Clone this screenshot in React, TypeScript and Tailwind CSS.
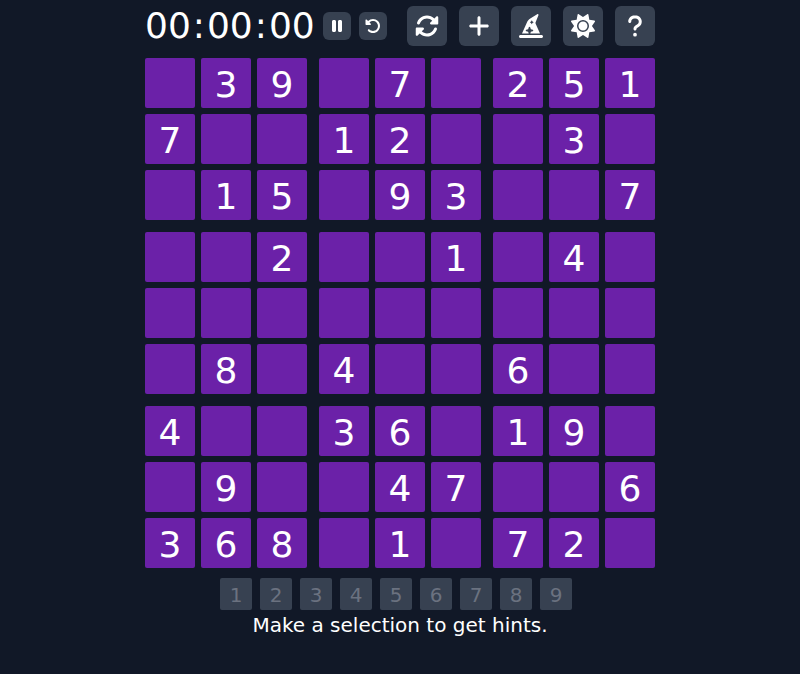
import type { ReactNode } from "react";
import { FaHatWizard, FaPause, FaPlus, FaQuestion, FaRotate, FaRotateLeft, FaSun } from "react-icons/fa6";

const rows = [
  "039070251",
  "700120030",
  "015093007",
  "002001040",
  "000000000",
  "080400600",
  "400360190",
  "090047006",
  "368010720",
];

const bands = [0, 3, 6];
const digits = [1, 2, 3, 4, 5, 6, 7, 8, 9];

function ToolButton({ label, children }: { label: string; children: ReactNode }) {
  return (
    <button type="button" aria-label={label} className="flex size-10 items-center justify-center rounded-md bg-[#374151] text-2xl">
      {children}
    </button>
  );
}

function TimerButton({ label, children }: { label: string; children: ReactNode }) {
  return (
    <button type="button" aria-label={label} className="flex size-7 items-center justify-center rounded-md bg-[#374151] text-base">
      {children}
    </button>
  );
}

function Cell({ value, row, column }: { value: string; row: number; column: number }) {
  return (
    <button
      type="button"
      aria-label={`Row ${row}, column ${column}`}
      className="flex size-[50px] items-center justify-center rounded-xs bg-[#6b21a8] pt-1 text-4xl"
    >
      {value === "0" ? "" : value}
    </button>
  );
}

export default function App() {
  return (
    <main className="flex min-h-screen flex-col items-center bg-[#111827] font-[Verdana,'DejaVu_Sans',sans-serif] text-white">
      <header className="flex h-[52px] w-full max-w-[510px] items-center justify-between">
        <div className="flex items-center gap-2">
          <time className="text-4xl">
            00<span className="px-0.5">:</span>00<span className="px-0.5">:</span>00
          </time>
          <TimerButton label="Pause"><FaPause /></TimerButton>
          <TimerButton label="Restart"><FaRotateLeft /></TimerButton>
        </div>
        <div className="flex gap-3">
          <ToolButton label="Refresh"><FaRotate /></ToolButton>
          <ToolButton label="New game"><FaPlus /></ToolButton>
          <ToolButton label="Solve"><FaHatWizard /></ToolButton>
          <ToolButton label="Theme"><FaSun /></ToolButton>
          <ToolButton label="Help"><FaQuestion /></ToolButton>
        </div>
      </header>

      <section aria-label="Sudoku board" className="mt-1.5 grid grid-cols-3 gap-3">
        {bands.map((top) =>
          bands.map((left) => (
            <div key={`${top}-${left}`} className="grid grid-cols-3 gap-1.5">
              {rows.slice(top, top + 3).map((row, r) =>
                row
                  .slice(left, left + 3)
                  .split("")
                  .map((value, c) => <Cell key={`${r}-${c}`} value={value} row={top + r + 1} column={left + c + 1} />),
              )}
            </div>
          )),
        )}
      </section>

      <div className="mt-2.5 mr-2 flex gap-2">
        {digits.map((digit) => (
          <button
            key={digit}
            type="button"
            disabled
            className="flex size-8 items-center justify-center rounded-xs bg-[#374151] pt-0.5 text-xl text-[#6b7280]"
          >
            {digit}
          </button>
        ))}
      </div>
      <p className="text-xl leading-[30px]">Make a selection to get hints.</p>
    </main>
  );
}
